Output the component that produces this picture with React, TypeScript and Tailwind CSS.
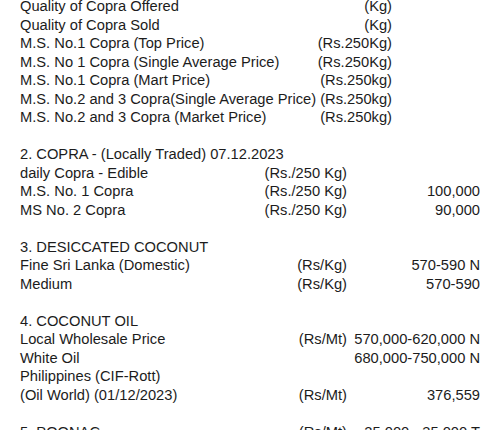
import React from 'react';

type Row = { label: string; unit?: string; value?: string };

const top: Row[] = [
  { label: 'Quality of Copra Offered', unit: '(Kg)' },
  { label: 'Quality of Copra Sold', unit: '(Kg)' },
  { label: 'M.S. No.1 Copra (Top Price)', unit: '(Rs.250Kg)' },
  { label: 'M.S. No 1 Copra (Single Average Price)', unit: '(Rs.250Kg)' },
  { label: 'M.S. No.1 Copra (Mart Price)', unit: '(Rs.250kg)' },
  { label: 'M.S. No.2 and 3 Copra(Single Average Price)', unit: '(Rs.250kg)' },
  { label: 'M.S. No.2 and 3 Copra (Market Price)', unit: '(Rs.250kg)' },
];

const sections: { title: string; unit?: string; value?: string; rows: Row[] }[] = [
  {
    title: '2. COPRA - (Locally Traded) 07.12.2023',
    rows: [
      { label: 'daily Copra - Edible', unit: '(Rs./250 Kg)' },
      { label: 'M.S. No. 1 Copra', unit: '(Rs./250 Kg)', value: '100,000' },
      { label: 'MS No. 2 Copra', unit: '(Rs./250 Kg)', value: '90,000' },
    ],
  },
  {
    title: '3. DESICCATED COCONUT',
    rows: [
      { label: 'Fine Sri Lanka (Domestic)', unit: '(Rs/Kg)', value: '570-590 N' },
      { label: 'Medium', unit: '(Rs/Kg)', value: '570-590' },
    ],
  },
  {
    title: '4. COCONUT OIL',
    rows: [
      { label: 'Local Wholesale Price', unit: '(Rs/Mt)', value: '570,000-620,000 N' },
      { label: 'White Oil', value: '680,000-750,000 N' },
      { label: 'Philippines (CIF-Rott)' },
      { label: '(Oil World) (01/12/2023)', unit: '(Rs/Mt)', value: '376,559' },
    ],
  },
  {
    title: '5. POONAC',
    unit: '(Rs/Mt)',
    value: '25,000 - 35,000 T',
    rows: [],
  },
];

function PriceRow({ row }: { row: Row }) {
  return (
    <div className="flex">
      <div className="flex-1 whitespace-nowrap">{row.label}</div>
      <div className="w-[110px] text-right whitespace-nowrap">{row.unit ?? ''}</div>
      <div className="w-[133px] text-right whitespace-nowrap">{row.value ?? ''}</div>
    </div>
  );
}

export default function App() {
  return (
    <div
      className="h-[430px] overflow-hidden bg-white px-5 text-[14.7px] leading-[18.5px] text-[#1c1c1c]"
      style={{ fontFamily: '"Liberation Sans", Arial, sans-serif' }}
    >
      <div className="mt-[-3px]">
        {top.map((r) => (
          <div key={r.label} className="flex pr-[88px]">
            <div className="flex-1 whitespace-nowrap">{r.label}</div>
            <div className="text-right whitespace-nowrap pl-1">{r.unit}</div>
          </div>
        ))}
      </div>

      {sections.map((s) => (
        <div key={s.title} className="mt-[18.5px]">
          {s.unit ? (
            <PriceRow row={{ label: s.title, unit: s.unit, value: s.value }} />
          ) : (
            <div className="whitespace-nowrap">{s.title}</div>
          )}
          {s.rows.map((r) => (
            <PriceRow key={r.label} row={r} />
          ))}
        </div>
      ))}
    </div>
  );
}
